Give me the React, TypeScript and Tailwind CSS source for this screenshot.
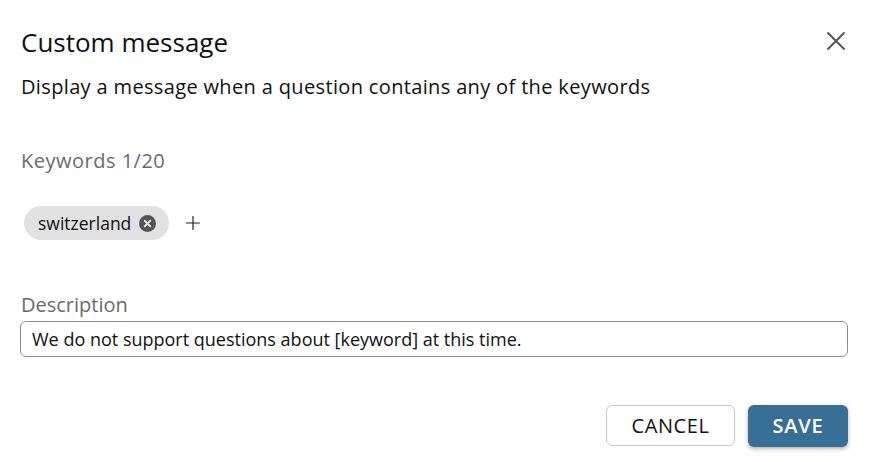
import { X, Plus } from "lucide-react";

const font = { fontFamily: '"Open Sans", "Noto Sans", sans-serif' };

function ChipRemove() {
  return (
    <svg width="17" height="17" viewBox="0 0 16 16" className="shrink-0">
      <circle cx="8" cy="8" r="8" fill="#545454" />
      <path d="M5.4 5.4l5.2 5.2M10.6 5.4l-5.2 5.2" stroke="#e6e6e6" strokeWidth="1.8" strokeLinecap="round" />
    </svg>
  );
}

export default function App() {
  return (
    <div className="w-[878px] h-[462px] bg-white text-[#111] overflow-hidden" style={font}>
      <div className="px-[21px] pt-[25px]">
        <div className="flex items-start justify-between">
          <h1 className="text-[26px] leading-[34px] text-[#111]">Custom message</h1>
          <button className="mt-[0px] mr-[5px] text-[#555]">
            <X size={32} strokeWidth={1.4} />
          </button>
        </div>
        <p className="mt-[14px] text-[20px] leading-[28px] tracking-[0.35px]">
          Display a message when a question contains any of the keywords
        </p>

        <div className="mt-[46px] text-[20px] leading-[28px] tracking-[0.5px] text-[#6b6b6b]">Keywords 1/20</div>

        <div className="mt-[31px] flex items-center gap-[13px] pl-[3px]">
          <div className="flex items-center gap-[8px] h-[34px] rounded-full bg-[#e1e1e1] pl-[14px] pr-[13px]">
            <span className="text-[17.5px] leading-[24px]">switzerland</span>
            <ChipRemove />
          </div>
          <Plus size={22} strokeWidth={1.3} className="text-[#222]" />
        </div>

        <div className="mt-[51px] text-[20px] leading-[28px] text-[#6b6b6b]">Description</div>
        <div className="mt-[2px] w-[828px] h-[36px] -ml-[1px] rounded-[6px] border border-[#8c8c8c] flex items-center px-[11px]">
          <span className="text-[18px] leading-[24px]">
            We do not support questions about [keyword] at this time.
          </span>
        </div>

        <div className="mt-[48px] flex justify-end gap-[13px] pr-[9px]">
          <button className="w-[129px] h-[41px] rounded-[6px] border border-[#c8c8c8] bg-white text-[20px] tracking-[0.6px] text-[#111]">
            CANCEL
          </button>
          <button className="w-[100px] h-[42px] rounded-[6px] bg-[#376f96] text-white text-[20px] font-semibold tracking-[0.8px] shadow-[0_2px_4px_rgba(0,0,0,0.3)]">
            SAVE
          </button>
        </div>
      </div>
    </div>
  );
}
